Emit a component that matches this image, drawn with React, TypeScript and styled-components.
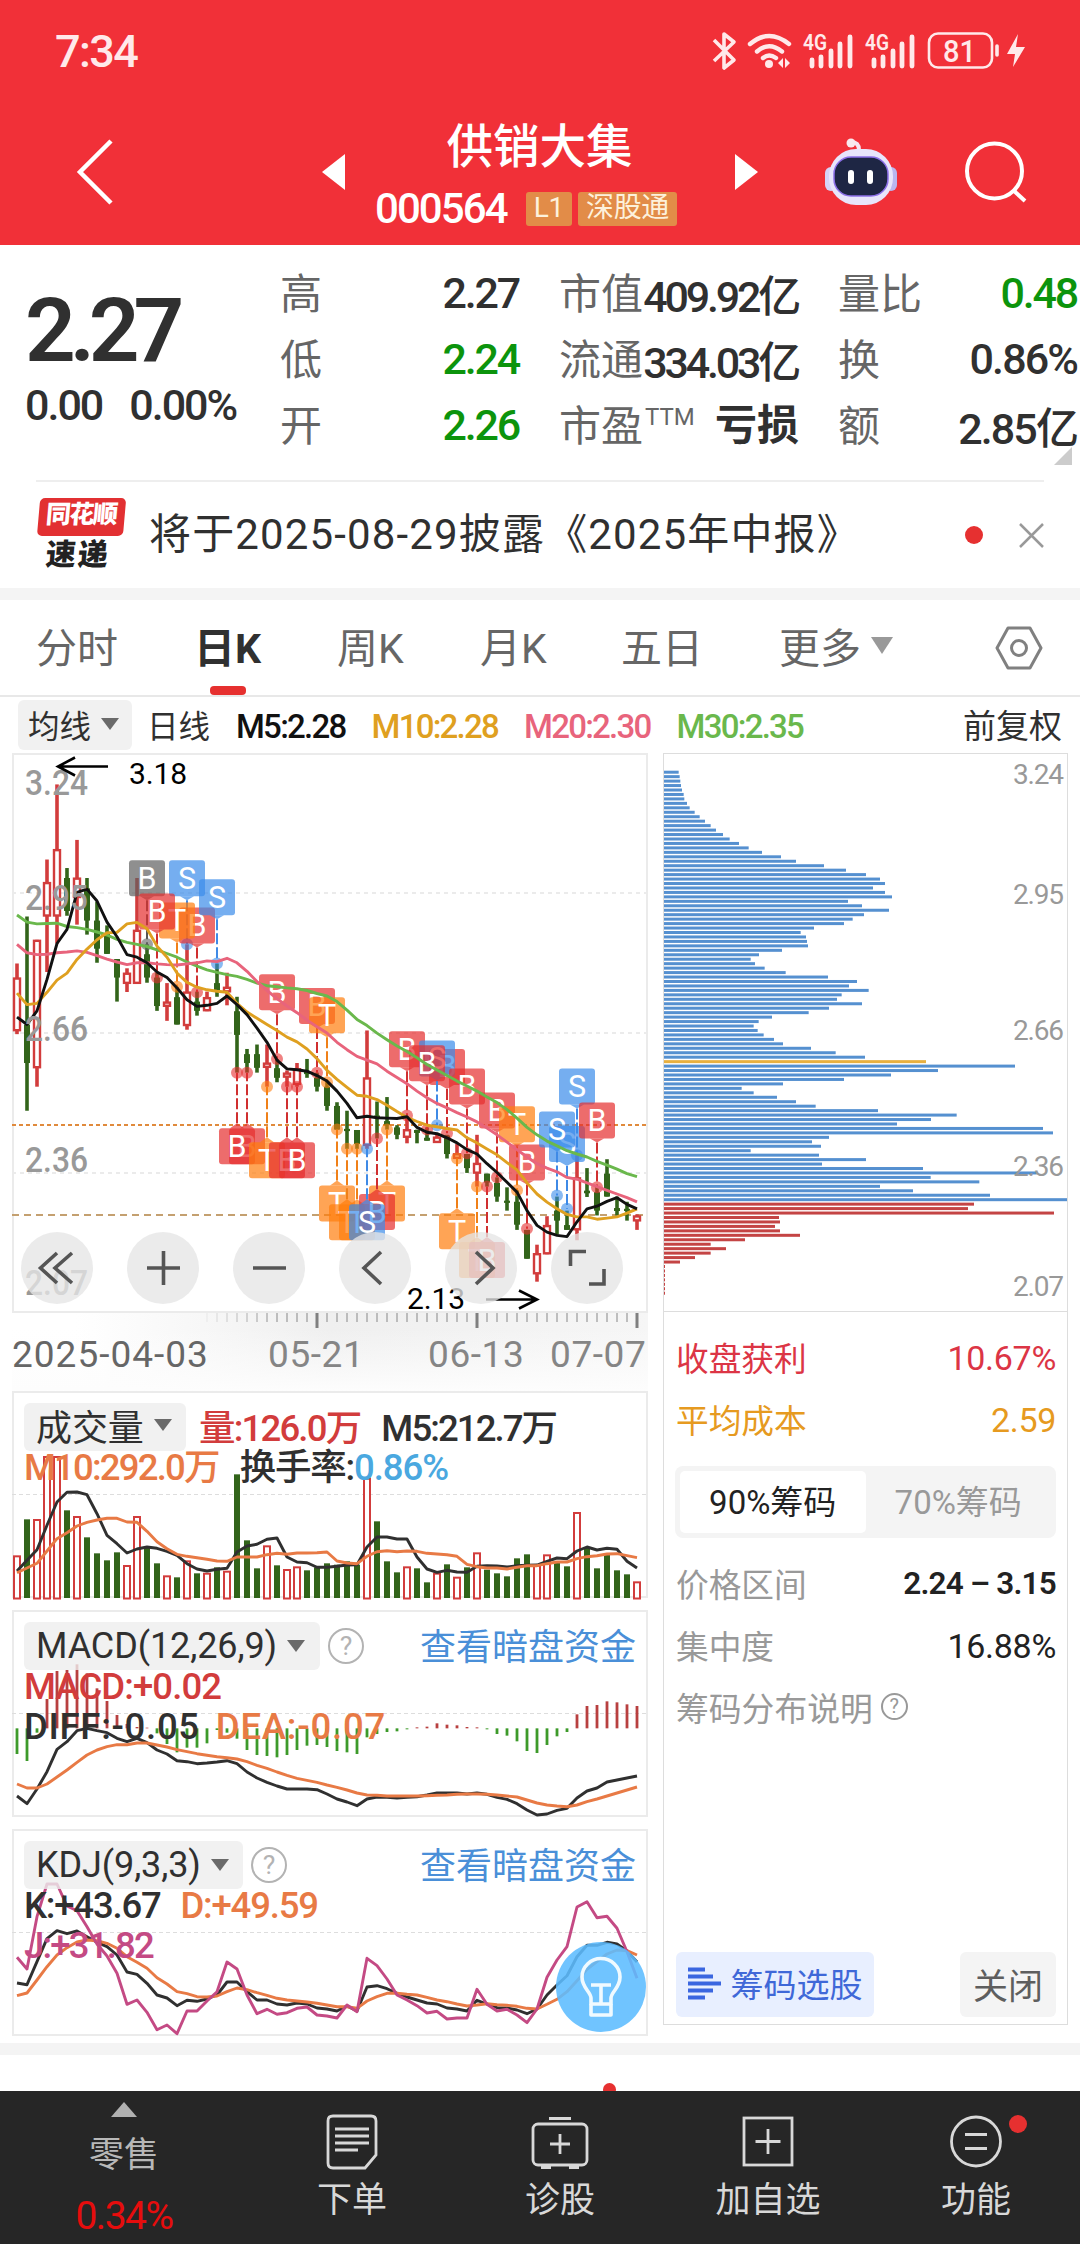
import React, { FC, ReactNode } from 'react';
import styled, { createGlobalStyle } from 'styled-components';

const RED = '#d23c3c';
const GREEN = '#32641a';
const BLUE = '#4a8fd8';
const ORANGE = '#e87a45';

const GlobalStyle = createGlobalStyle`
  body {
    margin: 0;
    background: #fff;
    font-family: Roboto, "Noto Sans CJK SC", sans-serif;
    color: #303030;
  }

  * {
    box-sizing: border-box;
  }

  svg {
    display: block;
  }
`;

const Screen = styled.div`
  width: 1080px;
  height: 2244px;
  overflow: hidden;
  display: flex;
  flex-direction: column;
  background: #fff;
`;

/* ---------- header ---------- */

const Header = styled.header`
  height: 245px;
  flex: none;
  background: #f13038;
  color: #fff;
`;

const StatusBar = styled.div`
  height: 102px;
  display: flex;
  align-items: center;
  justify-content: space-between;
  padding: 0 54px 0 55px;
`;

const Clock = styled.span`
  font-size: 45px;
  font-weight: 500;
  letter-spacing: -1.6px;
  color: #ffe9ea;
`;

const TitleBar = styled.div`
  height: 143px;
  display: grid;
  grid-template-columns: 322px 23px 390px 23px 67px 72px 68px 61px;
  align-items: center;
  padding-bottom: 4px;
`;

const BackIcon = styled.svg`
  margin-left: 76px;
`;

const TitleBlock = styled.div`
  display: flex;
  flex-direction: column;
  align-items: center;
  padding-top: 18px;
`;

const StockName = styled.div`
  font-size: 46.5px;
  font-weight: 500;
  line-height: 60px;
  margin-top: -8px;
  padding-right: 1px;
`;

const CodeRow = styled.div`
  display: flex;
  align-items: center;
  height: 60px;
  gap: 6px;
  padding: 4px 28px 0 0;
`;

const Code = styled.span`
  font-size: 42px;
  font-weight: 500;
  letter-spacing: -1.9px;
  margin-right: 13px;
`;

const Tag = styled.span`
  height: 34px;
  line-height: 32px;
  padding: 0 8px;
  border-radius: 3px;
  background: #e28c48;
  color: #fdf1dc;
  font-size: 28px;
  letter-spacing: -0.3px;
`;

/* ---------- quote ---------- */

const Quote = styled.section`
  height: 235px;
  flex: none;
  display: grid;
  grid-template-columns: 218px 242px 242px 242px;
  column-gap: 37px;
  padding: 12px 0 0 25px;
`;

const QuoteMain = styled.div`
  padding-top: 24px;
`;

const Price = styled.div`
  font-size: 89px;
  font-weight: 600;
  line-height: 100px;
  letter-spacing: -6.2px;
`;

const Change = styled.div`
  display: flex;
  gap: 27px;
  font-size: 43px;
  line-height: 48px;
  letter-spacing: -2px;
  font-weight: 500;
`;

const QuoteColumn = styled.div`
  display: flex;
  flex-direction: column;
`;

const QuoteRow = styled.div`
  display: flex;
  justify-content: space-between;
  align-items: center;
  height: 66px;
  white-space: nowrap;
  font-size: 42px;
  color: #666;
`;

const QuoteValue = styled.span<{ $tone?: string; $bold?: boolean; $spacing?: number }>`
  color: ${props => props.$tone || '#303030'};
  font-size: ${props => (props.$bold ? 42 : 43)}px;
  font-weight: ${props => (props.$bold ? 700 : 500)};
  letter-spacing: ${props => (props.$bold ? 0 : props.$spacing || -2.2)}px;
  padding: ${props => (props.$bold ? '0 2px 2px 0' : '5px 3px 0 0')};
`;

const Sup = styled.sup`
  font-size: 24px;
  vertical-align: 16px;
  line-height: 0;
  letter-spacing: 0;
  margin-left: 2px;
`;

const Corner = styled.i`
  position: absolute;
  left: 1054px;
  top: 447px;
  border-left: 18px solid transparent;
  border-bottom: 18px solid #ccc;
`;

/* ---------- news ---------- */

const News = styled.section`
  height: 108px;
  flex: none;
  margin: 0 36px;
  border-top: 2px solid #eee;
  display: flex;
  align-items: center;
`;

const NewsLogo = styled.div`
  width: 87px;
  display: flex;
  flex-direction: column;
  align-items: center;
  transform: skewX(-5deg);
  font-weight: 900;
`;

const LogoTop = styled.div`
  width: 86px;
  height: 38px;
  line-height: 34px;
  border-radius: 5px;
  background: #e23032;
  color: #fff;
  font-size: 25px;
  letter-spacing: -1.5px;
  text-align: center;
`;

const LogoBottom = styled.div`
  height: 36px;
  line-height: 37px;
  font-size: 30px;
  letter-spacing: 2px;
  color: #222;
`;

const NewsText = styled.div`
  flex: 1;
  margin-left: 26px;
  padding-bottom: 9px;
  font-size: 42px;
  letter-spacing: 1.15px;
  white-space: nowrap;
`;

const Dot = styled.i<{ $size: number }>`
  width: ${props => props.$size}px;
  height: ${props => props.$size}px;
  border-radius: 50%;
  background: #e63030;
`;

const CloseIcon = styled.svg`
  margin-left: 36px;
`;

const Band = styled.div`
  height: 12px;
  flex: none;
  background: #f4f4f4;
`;

/* ---------- tabs ---------- */

const Tabs = styled.nav`
  height: 97px;
  flex: none;
  display: grid;
  grid-template-columns: 158px 143px 143px 141px 158px 216px 48px;
  align-items: stretch;
  padding-left: 36px;
  border-bottom: 2px solid #e8e8e8;
  font-size: 41px;
  color: #666;
`;

const Tab = styled.div<{ $active?: boolean }>`
  display: flex;
  align-items: center;
  position: relative;
  justify-self: start;
  padding-bottom: 5px;
  color: ${props => (props.$active ? '#303030' : '#666')};
  font-weight: ${props => (props.$active ? 700 : 400)};

  &::after {
    content: '';
    display: ${props => (props.$active ? 'block' : 'none')};
    position: absolute;
    left: 16px;
    bottom: 0;
    width: 36px;
    height: 9px;
    border-radius: 4px;
    background: #e6302f;
  }
`;

const SettingsTab = styled(Tab)`
  padding-bottom: 0;
`;

const Caret = styled.i<{ $w?: number }>`
  border-left: ${props => (props.$w || 18) / 2}px solid transparent;
  border-right: ${props => (props.$w || 18) / 2}px solid transparent;
  border-top: ${props => ((props.$w || 18) > 20 ? 17 : 12)}px solid ${props => ((props.$w || 18) > 20 ? '#999' : '#6a6a6a')};
  margin-left: 10px;
`;

/* ---------- charts ---------- */

const AverageRow = styled.div`
  height: 56px;
  flex: none;
  display: flex;
  align-items: center;
  padding: 0 18px;
  font-size: 31.5px;
  white-space: nowrap;
`;

const AverageChip = styled.div`
  width: 114px;
  height: 50px;
  border-radius: 6px;
  background: #f1f1f1;
  display: flex;
  align-items: center;
  padding: 0 0 2px 10px;
  margin-right: 15px;
  color: #303030;
`;

const Average = styled.span<{ $color: string }>`
  color: ${props => props.$color};
  font-size: 33px;
  font-weight: 500;
  letter-spacing: -1.75px;
  margin-left: 26px;
  padding-top: 2px;
`;

const AverageLabel = styled.span`
  padding-bottom: 2px;
`;

const Adjust = styled(AverageLabel)`
  margin-left: auto;
  font-size: 33px;
`;

const Body = styled.main`
  height: 1290px;
  flex: none;
  display: flex;
  gap: 15px;
  padding-left: 12px;
`;

const LeftColumn = styled.div`
  width: 636px;
`;

const CandleBox = styled.div`
  position: relative;
  height: 560px;
`;

const ToolRow = styled.div`
  position: absolute;
  left: 9px;
  top: 479px;
  display: flex;
  gap: 34px;
`;

const Tool = styled.button`
  width: 72px;
  height: 72px;
  padding: 0;
  border: 0;
  border-radius: 50%;
  background: rgba(230, 230, 230, 0.78);
`;

const DateAxis = styled.div`
  height: 78px;
  background: linear-gradient(180deg, rgba(255, 255, 255, 0) 20%, #fdfdfd 100%),
              linear-gradient(90deg, #fff 10%, #efefef 50%, #f6f6f6 100%);
`;

const Dates = styled.div`
  display: grid;
  grid-template-columns: 256px 160px 122px 98px;
  font-size: 37px;
  line-height: 44px;
  letter-spacing: 0.6px;
  color: #858585;
  white-space: nowrap;
  margin-top: -2px;

  span:first-child {
    color: #666;
    letter-spacing: 1px;
  }
`;

const Panel = styled.div`
  position: relative;
  height: 207px;
  margin-bottom: 12px;
  border: 2px solid #ebebeb;
`;

const PanelChart = styled.svg`
  position: absolute;
  left: -2px;
  top: -2px;
`;

const PanelHead = styled.div`
  position: relative;
  display: flex;
  align-items: center;
  height: 48px;
  margin: 10px 10px 0 10px;
`;

const PanelChip = styled.div<{ $w: number; $lift?: number }>`
  width: ${props => props.$w}px;
  height: 48px;
  border-radius: 6px;
  background: rgba(238, 238, 238, 0.8);
  display: flex;
  align-items: center;
  padding: 0 0 ${props => props.$lift || 0}px 12px;
  font-size: 36px;
  letter-spacing: -0.1px;
  white-space: nowrap;
`;

const Help = styled.span<{ $size: number }>`
  width: ${props => props.$size}px;
  height: ${props => props.$size}px;
  line-height: ${props => props.$size - 4}px;
  border: 2px solid currentColor;
  border-radius: 50%;
  color: ${props => (props.$size > 30 ? '#b3b3b3' : '#999')};
  font-size: ${props => props.$size * 0.74}px;
  text-align: center;
  margin-left: 8px;
`;

const Link = styled.a`
  margin-left: auto;
  padding-bottom: 4px;
  color: ${BLUE};
  font-size: 36px;
`;

const Readings = styled.div<{ $first?: boolean }>`
  position: relative;
  height: 40px;
  line-height: 40px;
  display: flex;
  margin: ${props => (props.$first ? -3 : 0)}px 0 0 10px;
  white-space: nowrap;
`;

const Reading = styled.span<{ $color?: string; $left?: number; $spacing?: number }>`
  color: ${props => props.$color || '#303030'};
  margin-left: ${props => props.$left || 0}px;
  font-size: 36.5px;
  letter-spacing: ${props => props.$spacing || -1.2}px;
  font-weight: 500;
`;

const HeadReading = styled(Reading)`
  padding-bottom: 4px;
`;

const Bulb = styled.div`
  position: absolute;
  left: 542px;
  top: 111px;
  width: 90px;
  height: 90px;
  border-radius: 50%;
  background: rgba(92, 188, 255, 0.88);
`;

/* ---------- chip distribution ---------- */

const Chips = styled.aside`
  width: 405px;
  height: 1272px;
  border: 1px solid #ddd;
  display: flex;
  flex-direction: column;
`;

const ChipBody = styled.div`
  flex: 1;
  display: flex;
  flex-direction: column;
  border-top: 1px solid #ddd;
  padding: 13px 11px 7px 12px;
`;

const ChipRow = styled.div<{ $color: string }>`
  height: 62px;
  display: flex;
  justify-content: space-between;
  align-items: center;
  font-size: 32.7px;
  color: ${props => props.$color};
`;

const ChipValue = styled.span<{ $bold?: boolean; $dark?: boolean }>`
  font-size: ${props => (props.$bold ? 31.5 : 34)}px;
  font-weight: ${props => (props.$bold ? 600 : 400)};
  letter-spacing: ${props => (props.$bold ? -0.8 : -0.3)}px;
  color: ${props => (props.$bold || props.$dark ? '#222' : 'inherit')};
  padding-top: 3px;
`;

const Segment = styled.div`
  height: 72px;
  flex: none;
  display: flex;
  margin: 17px 0 13px -1px;
  padding: 5px;
  border-radius: 8px;
  background: #f4f4f4;
`;

const SegmentItem = styled.div<{ $active?: boolean }>`
  flex: 1;
  line-height: 63px;
  text-align: center;
  border-radius: 5px;
  background: ${props => (props.$active ? '#fff' : 'transparent')};
  color: ${props => (props.$active ? '#222' : '#999')};
  font-size: 33px;
`;

const Note = styled.div`
  height: 62px;
  display: flex;
  align-items: center;
  font-size: 32.8px;
  color: #999;
`;

const Actions = styled.div`
  margin-top: auto;
  display: flex;
  justify-content: space-between;
`;

const Action = styled.button<{ $primary?: boolean }>`
  width: ${props => (props.$primary ? 198 : 96)}px;
  height: 65px;
  padding: 0 0 3px;
  border: 0;
  border-radius: 6px;
  display: flex;
  align-items: center;
  justify-content: center;
  gap: 10px;
  font-family: inherit;
  font-size: ${props => (props.$primary ? 33 : 35)}px;
  white-space: nowrap;
  background: ${props => (props.$primary ? '#e8efff' : '#f4f4f4')};
  color: ${props => (props.$primary ? '#3f68d8' : '#5e5e5e')};
`;

/* ---------- bottom bar ---------- */

const Teaser = styled.div`
  height: 36px;
  flex: none;
  display: flex;
  align-items: flex-end;
  padding-left: 603px;
  overflow: hidden;

  i {
    margin-bottom: -5px;
  }
`;

const BottomBar = styled.footer`
  height: 153px;
  flex: none;
  display: grid;
  grid-template-columns: 248px repeat(4, 208px);
  background: #262626;
  color: #d8d8d8;
`;

const IndexItem = styled.div`
  display: flex;
  flex-direction: column;
  align-items: center;
  font-size: 35px;
  color: #b8b8b8;
`;

const IndexName = styled.span`
  line-height: 48px;
  margin-top: 15px;
`;

const IndexChange = styled.span`
  color: #e60d0d;
  font-size: 39px;
  line-height: 50px;
  letter-spacing: -1.5px;
  margin-top: 11px;
`;

const NavItem = styled.div`
  position: relative;
  display: flex;
  flex-direction: column;
  align-items: center;
  padding-top: 20px;
  font-size: 35px;
  line-height: 55px;
`;

const NavDot = styled(Dot)`
  position: absolute;
  left: 137px;
  top: 24px;
`;

/* ---------- data ---------- */

// [high, body top, body bottom, low, rising]
type Candle = [number, number, number, number, number];

const candles: Candle[] = [
  [577, 615, 760, 768, 1], [450, 742, 846, 975, 0], [513, 513, 860, 910, 1], [296, 357, 450, 600, 1],
  [93, 268, 450, 523, 1], [319, 346, 435, 448, 0], [243, 345, 400, 472, 1], [346, 374, 461, 499, 0],
  [410, 461, 537, 575, 0], [474, 497, 551, 551, 0], [565, 565, 615, 680, 0], [590, 602, 632, 654, 1],
  [346, 486, 632, 632, 1], [525, 552, 615, 629, 0], [602, 615, 692, 705, 0], [630, 680, 694, 732, 1],
  [640, 668, 742, 742, 0], [525, 653, 746, 756, 1], [653, 680, 705, 718, 0], [653, 668, 706, 706, 1],
  [577, 630, 653, 667, 0], [602, 640, 655, 690, 1], [667, 706, 770, 872, 0], [808, 822, 846, 872, 0],
  [796, 822, 859, 872, 0], [796, 845, 859, 910, 1], [835, 860, 886, 898, 0], [866, 872, 884, 910, 1],
  [846, 860, 905, 910, 1], [835, 868, 876, 886, 0], [872, 886, 910, 923, 0], [895, 910, 962, 975, 0],
  [952, 962, 1026, 1026, 0], [975, 1024, 1030, 1078, 0], [1027, 1027, 1065, 1078, 0], [758, 885, 1070, 1078, 1],
  [950, 988, 993, 1050, 0], [938, 1003, 1014, 1026, 0], [1014, 1020, 1040, 1052, 0], [990, 1025, 1048, 1063, 1],
  [1026, 1027, 1035, 1063, 0], [1020, 1048, 1056, 1056, 0], [1035, 1045, 1062, 1062, 1], [1040, 1042, 1092, 1104, 0],
  [1065, 1090, 1105, 1105, 1], [1092, 1092, 1130, 1143, 0], [1040, 1116, 1145, 1180, 1], [1145, 1145, 1169, 1180, 0],
  [1155, 1170, 1207, 1221, 0], [1182, 1218, 1224, 1245, 0], [1190, 1221, 1283, 1297, 0], [1297, 1297, 1375, 1375, 0],
  [1337, 1360, 1417, 1437, 1], [1260, 1284, 1363, 1363, 1], [1207, 1245, 1272, 1310, 0], [1245, 1284, 1297, 1297, 0],
  [1095, 1155, 1298, 1325, 1], [1130, 1191, 1198, 1208, 0], [1180, 1195, 1245, 1258, 0], [1106, 1145, 1207, 1207, 0],
  [1207, 1238, 1246, 1258, 0], [1221, 1240, 1246, 1272, 0], [1255, 1258, 1274, 1297, 1],
];

const ma5 = [722, 742, 705, 620, 523, 485, 385, 376, 408, 465, 505, 553, 560, 575, 600, 615, 643, 675, 693, 690, 685, 665, 688, 715, 752, 790, 838, 862, 864, 868, 880, 895, 922, 955, 994, 990, 994, 995, 996, 991, 1020, 1033, 1037, 1048, 1062, 1080, 1092, 1118, 1142, 1168, 1195, 1245, 1285, 1303, 1312, 1315, 1275, 1240, 1233, 1220, 1210, 1228, 1240];
const ma10 = [657, 688, 685, 655, 622, 603, 566, 538, 513, 494, 493, 470, 466, 483, 530, 560, 603, 628, 641, 648, 652, 655, 685, 708, 725, 742, 758, 776, 789, 808, 834, 866, 890, 912, 933, 936, 945, 960, 977, 993, 1004, 1014, 1018, 1023, 1027, 1048, 1062, 1078, 1094, 1115, 1135, 1170, 1200, 1222, 1240, 1255, 1262, 1262, 1268, 1265, 1262, 1252, 1240];
const ma20 = [525, 548, 553, 552, 548, 546, 543, 547, 556, 565, 573, 580, 575, 575, 578, 580, 581, 578, 575, 570, 572, 563, 575, 598, 626, 650, 672, 692, 710, 730, 748, 765, 790, 810, 828, 838, 848, 868, 885, 902, 922, 940, 955, 967, 980, 992, 1005, 1022, 1040, 1060, 1080, 1100, 1118, 1130, 1140, 1155, 1160, 1170, 1180, 1190, 1200, 1210, 1221];
const ma30 = [446, 465, 470, 469, 468, 477, 480, 485, 492, 500, 512, 520, 525, 531, 540, 550, 560, 573, 584, 594, 601, 607, 612, 620, 630, 637, 640, 643, 645, 650, 658, 665, 680, 703, 728, 745, 765, 783, 800, 815, 832, 850, 865, 880, 895, 908, 922, 938, 953, 972, 995, 1020, 1040, 1057, 1070, 1083, 1092, 1100, 1112, 1122, 1133, 1145, 1153];

// [day, letter, marked price, label top]; X is a greyed-out buy
type Mark = [number, string, number, number];

const marks: Mark[] = [
  [13, 'X', 525, 298], [17, 'S', 525, 298], [18, 'B', 655, 426], [16, 'T', 640, 412], [14, 'B', 615, 388], [20, 'S', 577, 349],
  [26, 'B', 835, 606], [30, 'B', 872, 643], [31, 'T', 898, 668],
  [23, 'B', 872, 1022], [22, 'B', 872, 1022], [25, 'T', 910, 1060], [27, 'B', 910, 1060], [28, 'B', 910, 1060],
  [32, 'T', 1026, 1177], [33, 'T', 1078, 1228], [34, 'T', 1078, 1228], [37, 'T', 1026, 1177], [36, 'B', 1050, 1200], [35, 'S', 1078, 1228],
  [39, 'B', 988, 760], [43, 'B', 1036, 808], [42, 'S', 1014, 785], [41, 'B', 1026, 798], [45, 'B', 1090, 861],
  [44, 'T', 1104, 1252], [46, 'T', 1180, 1330], [47, 'B', 1180, 1330],
  [48, 'B', 1155, 926], [50, 'T', 1190, 963], [51, 'B', 1294, 1066],
  [56, 'S', 1095, 861], [55, 'S', 1240, 1016], [54, 'S', 1204, 977], [58, 'B', 1182, 953],
];

const markColors: { [key: string]: [string, string] } = {
  B: ['#e62e2e', '#d02f2f'],
  T: ['#ff7d0d', '#f08018'],
  S: ['#3b8cea', '#3f8ae6'],
  X: ['#606060', '#555'],
};

const volumes = [765, 657, 656, 467, 467, 630, 647, 711, 759, 780, 756, 794, 647, 742, 789, 825, 831, 780, 819, 817, 801, 811, 522, 720, 804, 735, 795, 806, 798, 810, 801, 789, 793, 783, 793, 532, 663, 783, 816, 798, 804, 846, 817, 792, 829, 801, 756, 808, 819, 828, 774, 762, 793, 762, 787, 798, 635, 740, 804, 762, 810, 822, 843];
const rising = [0, 2, 3, 4, 6, 11, 12, 15, 17, 19, 21, 25, 27, 28, 35, 39, 42, 44, 46, 52, 53, 56, 62];
const vol5 = [812, 780, 748, 675, 605, 576, 575, 583, 640, 705, 730, 758, 746, 740, 744, 753, 765, 790, 806, 812, 807, 804, 755, 737, 732, 717, 713, 770, 785, 787, 801, 801, 798, 794, 793, 740, 710, 710, 716, 716, 770, 806, 816, 810, 815, 816, 798, 796, 797, 800, 796, 795, 794, 783, 773, 775, 752, 740, 749, 744, 747, 783, 803];
const vol10 = [817, 803, 789, 752, 715, 697, 677, 666, 659, 654, 654, 665, 666, 693, 724, 745, 762, 768, 772, 777, 782, 783, 770, 770, 770, 763, 759, 762, 758, 758, 757, 755, 782, 788, 790, 768, 754, 751, 754, 752, 753, 759, 761, 763, 768, 792, 799, 803, 803, 806, 801, 796, 796, 790, 785, 785, 775, 769, 766, 761, 760, 766, 772];

const macd = [462, 483, 398, 297, 213, 210, 193, 220, 265, 303, 345, 372, 381, 383, 400, 432, 457, 443, 443, 430, 390, 398, 416, 450, 465, 468, 472, 465, 450, 437, 435, 441, 453, 457, 462, 412, 402, 396, 394, 388, 382, 380, 370, 374, 376, 381, 382, 388, 402, 407, 424, 453, 459, 435, 409, 396, 343, 318, 315, 304, 307, 313, 318];
const diff = [588, 611, 567, 515, 448, 425, 392, 385, 392, 398, 415, 425, 415, 428, 450, 462, 482, 485, 491, 489, 486, 482, 491, 516, 534, 547, 558, 567, 567, 567, 569, 582, 597, 606, 617, 597, 591, 592, 594, 592, 590, 585, 579, 579, 579, 582, 579, 583, 592, 598, 611, 630, 645, 642, 631, 625, 594, 573, 564, 546, 540, 534, 528];
const dea = [552, 564, 564, 552, 531, 510, 487, 465, 450, 440, 434, 434, 429, 429, 435, 441, 449, 455, 461, 466, 470, 473, 477, 485, 496, 505, 516, 526, 535, 541, 547, 555, 562, 570, 579, 585, 586, 588, 588, 588, 588, 587, 586, 585, 583, 582, 582, 583, 585, 588, 591, 600, 609, 615, 618, 620, 615, 605, 597, 588, 579, 570, 561];

const kdjK = [489, 494, 425, 356, 332, 341, 333, 350, 367, 380, 405, 456, 463, 490, 525, 534, 557, 541, 544, 537, 525, 486, 486, 515, 540, 540, 552, 555, 549, 552, 564, 567, 573, 558, 573, 501, 497, 506, 520, 531, 540, 549, 552, 564, 567, 573, 541, 552, 563, 564, 570, 581, 567, 525, 495, 467, 410, 376, 376, 367, 372, 393, 426];
const kdjD = [527, 519, 480, 440, 405, 383, 366, 360, 362, 370, 385, 410, 427, 445, 473, 492, 515, 521, 530, 531, 528, 515, 504, 509, 518, 526, 535, 540, 543, 546, 550, 555, 560, 560, 565, 543, 530, 520, 520, 523, 525, 532, 540, 545, 552, 558, 555, 551, 554, 556, 559, 565, 567, 553, 538, 515, 482, 448, 425, 402, 390, 392, 405];
const kdjJ = [412, 447, 290, 192, 192, 258, 272, 320, 372, 408, 460, 553, 540, 577, 629, 615, 641, 573, 573, 543, 515, 426, 447, 525, 581, 568, 583, 578, 565, 561, 585, 588, 594, 555, 575, 415, 437, 477, 525, 540, 557, 579, 574, 597, 594, 594, 508, 553, 573, 568, 585, 608, 567, 472, 420, 380, 261, 245, 293, 289, 325, 395, 475];

const distribution = [
  86, 89, 91, 93, 96, 101, 103, 111, 119, 134, 149, 165, 182, 198, 219, 239, 267, 296, 336, 393, 438, 522, 588, 648, 690, 705, 669, 705,
  726, 594, 636, 717, 642, 608, 582, 492, 452, 468, 471, 474, 396, 327, 302, 315, 344, 407, 534, 621, 597, 656, 575, 561, 636, 537, 476,
  366, 326, 311, 323, 341, 372, 399, 483, 557, 645, 828, 1095, 864, 723, 582, 399, 275, 311, 381, 438, 497, 684, 920, 843, 741, 1179, 1209,
  537, 486, 513, 302, 507, 648, 516, 819, 1160, 842, 988, 690, 789, 1020, 1252, 972, 954, 1212, 387, 390, 375, 390, 450, 285, 182, 228,
  182, 135, 90, 45, 45, 45, 45, 45, 45, 45,
];
const AVERAGE_COST = 65;
const FIRST_PROFIT = 97;

const dayX = (i: number) => 5 + i * 10;
const priceY = (v: number) => v * 0.37 - 3;
const toPoints = (values: number[], y: (v: number) => number) =>
  values.map((v, i) => `${dayX(i)},${y(v).toFixed(1)}`).join(' ');

/* ---------- drawings ---------- */

interface ILine {
  values: number[];
  y: (v: number) => number;
  color: string;
}

const Line: FC<ILine> = ({ values, y, color }) => (
  <polyline points={toPoints(values, y)} fill="none" stroke={color} strokeWidth="2.9" strokeLinejoin="round" />
);

const MarkBadge: FC<{ mark: Mark }> = ({ mark }) => {
  const [day, letter, dot, top] = mark;
  const [fill, stroke] = markColors[letter];
  const x = dayX(day);
  const y = priceY(top);
  const dotY = priceY(dot);
  const above = y < dotY;
  const tip = above ? y + 40 : y - 5;
  const edge = above ? y + 36 : y;
  return (
    <g>
      <line x1={x} x2={x} y1={tip} y2={dotY} stroke={stroke} strokeWidth="2" strokeDasharray="11 3" />
      <circle cx={x} cy={dotY} r="6" fill={fill} opacity="0.6" />
      <rect x={x - 18} y={y} width="36" height="36" rx="3" fill={fill} opacity="0.7" />
      <path d={`M${x - 7} ${edge} L${x} ${tip} L${x + 7} ${edge}Z`} fill={fill} opacity="0.7" />
      <text x={x} y={y + 28.5} fontSize="30.5" fill="#fff" textAnchor="middle">{letter === 'X' ? 'B' : letter}</text>
    </g>
  );
};

const CandleChart = () => (
  <svg width="636" height="560">
    <rect x="1" y="1" width="634" height="558" fill="#fff" stroke="#ebebeb" strokeWidth="2" />
    {[140, 280, 420].map(y => (
      <line key={y} x1="0" x2="636" y1={y} y2={y} stroke="#ebebeb" strokeWidth="2" strokeDasharray="4 4" />
    ))}
    <line x1="0" x2="636" y1="372" y2="372" stroke="#e08a3c" strokeWidth="2" strokeDasharray="4 3" />
    <line x1="0" x2="636" y1="462" y2="462" stroke="#c4a070" strokeWidth="2" strokeDasharray="7 5" />
    {candles.map(([high, top, bottom, low, up], i) => {
      const x = dayX(i);
      const color = up ? RED : GREEN;
      return (
        <g key={i}>
          <line x1={x} x2={x} y1={priceY(high)} y2={priceY(low)} stroke={color} strokeWidth="3.6" />
          {up ? (
            <rect x={x - 3} y={priceY(top) + 1} width="6" height={Math.max(3, (bottom - top) * 0.37 - 2)} fill="#fff" stroke={color} strokeWidth="2.4" />
          ) : (
            <rect x={x - 3} y={priceY(top)} width="6" height={(bottom - top) * 0.37} fill={color} />
          )}
        </g>
      );
    })}
    {marks.map(mark => <MarkBadge key={mark[0]} mark={mark} />)}
    <Line values={ma30} y={priceY} color="#6ab84c" />
    <Line values={ma20} y={priceY} color="#e8647c" />
    <Line values={ma10} y={priceY} color="#dfa020" />
    <Line values={ma5} y={priceY} color="#111" />
    <g fill="#999" fontSize="35" fontWeight="500">
      <text x="13" y="42" textLength="63" lengthAdjust="spacingAndGlyphs">3.24</text>
      <text x="13" y="157" textLength="63" lengthAdjust="spacingAndGlyphs">2.95</text>
      <text x="13" y="288" textLength="63" lengthAdjust="spacingAndGlyphs">2.66</text>
      <text x="13" y="419" textLength="63" lengthAdjust="spacingAndGlyphs">2.36</text>
      <text x="13" y="542" textLength="63" lengthAdjust="spacingAndGlyphs">2.07</text>
    </g>
    <g stroke="#000" strokeWidth="2.6" fill="none">
      <path d="M96 13.500H46M63 4.500L46 13.500L63 22.500" />
      <path d="M474 546.500H525M507 537.500L525 546.500L507 555.500" />
    </g>
    <g fontSize="30" fill="#000">
      <text x="117" y="31" textLength="58">3.18</text>
      <text x="395" y="556" textLength="58">2.13</text>
    </g>
  </svg>
);

const tools: ReactNode[] = [
  <path d="M36 21L19.500 36L36 51M51 21L34 36L51 51" />,
  <path d="M20 36H53M36.500 19V53" />,
  <path d="M20 36H53" />,
  <path d="M42 20L25 36L42 52" />,
  <path d="M31 20L48 36L31 52" />,
  <path d="M35 19.500H19.500V34M38 52H53V37" />,
];

const Ticks = () => (
  <svg width="636" height="22">
    {Array.from({ length: 44 }, (_, n) => {
      const i = n + 19;
      const major = (i - 30) % 16 === 0;
      return (
        <line
          key={i}
          x1={dayX(i)}
          x2={dayX(i)}
          y1="0"
          y2={major ? 15 : 9}
          stroke={major ? '#808080' : '#999'}
          strokeWidth={major ? 3 : 1.2}
          opacity={Math.min(1, (n + 1) / 8)}
        />
      );
    })}
  </svg>
);

const volumeY = (v: number) => (v - 272) / 3;
const macdY = (v: number) => (v - 30) / 3;
const kdjY = (v: number) => (v - 27) / 3;

const DashLine: FC<{ y: number }> = ({ y }) => (
  <line x1="0" x2="636" y1={y} y2={y} stroke="#ddd" strokeWidth="1.2" strokeDasharray="4 3" />
);

const VolumeChart = () => (
  <PanelChart width="636" height="210">
    <DashLine y={103.5} />
    {volumes.map((v, i) => (rising.includes(i) ? (
      <rect key={i} x={dayX(i) - 3} y={volumeY(v) + 1} width="6" height={206.500 - volumeY(v)} fill="#fff" stroke={RED} strokeWidth="2" />
    ) : (
      <rect key={i} x={dayX(i) - 3} y={volumeY(v)} width="6" height={207 - volumeY(v)} fill={GREEN} />
    )))}
    <Line values={vol5} y={volumeY} color="#303030" />
    <Line values={vol10} y={volumeY} color={ORANGE} />
  </PanelChart>
);

const MacdChart = () => (
  <PanelChart width="636" height="207">
    <DashLine y={103.5} />
    {macd.map((v, i) => (
      <line key={i} x1={dayX(i)} x2={dayX(i)} y1={macdY(385)} y2={macdY(v)} stroke={v < 385 ? '#b84040' : '#3d9a2a'} strokeWidth="2.8" />
    ))}
    <Line values={diff} y={macdY} color="#303030" />
    <Line values={dea} y={macdY} color={ORANGE} />
  </PanelChart>
);

const KdjChart = () => (
  <PanelChart width="636" height="207">
    <DashLine y={103.5} />
    <Line values={kdjK} y={kdjY} color="#303030" />
    <Line values={kdjD} y={kdjY} color={ORANGE} />
    <Line values={kdjJ} y={kdjY} color="#c44a84" />
  </PanelChart>
);

const DistributionChart = () => (
  <svg width="403" height="557">
    {distribution.map((edge, i) => {
      let color = '#5590d0';
      if (i === AVERAGE_COST) color = '#e8b040';
      if (i >= FIRST_PROFIT) color = '#c44444';
      return <rect key={i} x="0" y={16.7 + i * 4.453} width={(edge - 42) / 3} height="3" fill={color} />;
    })}
    <g fontSize="28" fill="#999">
      <text x="349" y="30" textLength="51">3.24</text>
      <text x="349" y="150" textLength="51">2.95</text>
      <text x="349" y="286" textLength="51">2.66</text>
      <text x="349" y="422" textLength="51">2.36</text>
      <text x="349" y="542" textLength="51">2.07</text>
    </g>
  </svg>
);

const StatusIcons = () => (
  <svg width="314" height="44" viewBox="712 29 314 44" fill="none" stroke="#ffe9ea">
    <path d="M714 40L734 60L724 68V34L734 42L714 61" strokeWidth="3.6" strokeLinejoin="round" />
    <path d="M750 44Q769 28 789 44M757 51.500Q769 41 782 51.500M763 58Q769 53 776 58" strokeWidth="4.4" strokeLinecap="round" />
    <circle cx="769" cy="64" r="4" fill="#ffe9ea" stroke="none" />
    <path d="M778 63l5-5v10zM785 58l5 5-5 5z" fill="#ffe9ea" stroke="none" />
    {[0, 62].map(dx => (
      <g key={dx} transform={`translate(${dx} 0)`}>
        <path d="M812 60V66M821 57V66M831 51V66M840 44V66M850 37V66" strokeWidth="4.8" strokeLinecap="round" />
        <text x="803" y="50" fontSize="22" fontWeight="600" fill="#ffe9ea" stroke="none" textLength="24" lengthAdjust="spacingAndGlyphs">4G</text>
      </g>
    ))}
    <rect x="929" y="33.500" width="63" height="34" rx="9" strokeWidth="2.6" />
    <path d="M997 46V55" strokeWidth="3.600" strokeLinecap="round" />
    <text x="943" y="61.500" fontSize="31" fontWeight="500" fill="#ffe9ea" stroke="none" textLength="33" lengthAdjust="spacingAndGlyphs">81</text>
    <path d="M1018 34L1007 54H1015L1013 67L1025 47H1016Z" fill="#ffe9ea" stroke="none" />
  </svg>
);

const Robot = () => (
  <svg width="72" height="70" viewBox="0 0 72 70">
    <path d="M34 13Q34 5 26 5" fill="none" stroke="#f6e6f2" strokeWidth="4" />
    <circle cx="26" cy="6" r="4.500" fill="#f9e9ee" />
    <rect x="0" y="30" width="12" height="24" rx="6" fill="#d6d3f7" />
    <rect x="60" y="30" width="12" height="24" rx="6" fill="#b9b6f0" />
    <rect x="4" y="12" width="64" height="56" rx="27" fill="#e8e5fb" />
    <rect x="9" y="20" width="54" height="39" rx="17" fill="#1e2644" stroke="#8c6fe8" strokeWidth="1.500" />
    <rect x="23" y="33" width="6" height="14" rx="3" fill="#fff" />
    <rect x="42" y="33" width="6" height="14" rx="3" fill="#fff" />
  </svg>
);

const NavIcon: FC<{ children: ReactNode }> = ({ children }) => (
  <svg width="62" height="62" fill="none" stroke="#d8d8d8" strokeWidth="2.8">{children}</svg>
);

const App = () => (
  <Screen>
    <GlobalStyle />
    <Header>
      <StatusBar>
        <Clock>7:34</Clock>
        <StatusIcons />
      </StatusBar>
      <TitleBar>
        <BackIcon width="40" height="70" fill="none" stroke="#fff" strokeWidth="4.5">
          <path d="M35 4L4 35L35 66" />
        </BackIcon>
        <svg width="23" height="36"><path d="M0 18L23 0V36Z" fill="#fff" /></svg>
        <TitleBlock>
          <StockName>供销大集</StockName>
          <CodeRow>
            <Code>000564</Code>
            <Tag>L1</Tag>
            <Tag>深股通</Tag>
          </CodeRow>
        </TitleBlock>
        <svg width="23" height="36"><path d="M23 18L0 0V36Z" fill="#fff" /></svg>
        <i />
        <Robot />
        <i />
        <svg width="62" height="62" fill="none" stroke="#fff" strokeWidth="4">
          <circle cx="29.500" cy="30" r="27.500" />
          <path d="M48 49L60 60" />
        </svg>
      </TitleBar>
    </Header>

    <Quote>
      <QuoteMain>
        <Price>2.27</Price>
        <Change><span>0.00</span><span>0.00%</span></Change>
      </QuoteMain>
      <QuoteColumn>
        <QuoteRow>高<QuoteValue>2.27</QuoteValue></QuoteRow>
        <QuoteRow>低<QuoteValue $tone="#0c940c">2.24</QuoteValue></QuoteRow>
        <QuoteRow>开<QuoteValue $tone="#0c940c">2.26</QuoteValue></QuoteRow>
      </QuoteColumn>
      <QuoteColumn>
        <QuoteRow>市值<QuoteValue $spacing={-3.2}>409.92亿</QuoteValue></QuoteRow>
        <QuoteRow>流通<QuoteValue $spacing={-3.2}>334.03亿</QuoteValue></QuoteRow>
        <QuoteRow><span>市盈<Sup>TTM</Sup></span><QuoteValue $bold>亏损</QuoteValue></QuoteRow>
      </QuoteColumn>
      <QuoteColumn>
        <QuoteRow>量比<QuoteValue $tone="#0c940c">0.48</QuoteValue></QuoteRow>
        <QuoteRow>换<QuoteValue $spacing={-1.9}>0.86%</QuoteValue></QuoteRow>
        <QuoteRow>额<QuoteValue $spacing={-1.9}>2.85亿</QuoteValue></QuoteRow>
      </QuoteColumn>
      <Corner />
    </Quote>

    <News>
      <NewsLogo>
        <LogoTop>同花顺</LogoTop>
        <LogoBottom>速递</LogoBottom>
      </NewsLogo>
      <NewsText>将于2025-08-29披露《2025年中报》</NewsText>
      <Dot $size={18} />
      <CloseIcon width="25" height="25" stroke="#999" strokeWidth="2.500">
        <path d="M1 1L24 24M24 1L1 24" />
      </CloseIcon>
    </News>
    <Band />

    <Tabs>
      <Tab>分时</Tab>
      <Tab $active>日K</Tab>
      <Tab>周K</Tab>
      <Tab>月K</Tab>
      <Tab>五日</Tab>
      <Tab>更多<Caret $w={23} /></Tab>
      <SettingsTab>
        <svg width="48" height="48" fill="none" stroke="#808080" strokeWidth="3">
          <path d="M13 4H35L46 24L35 44H13L2 24Z" strokeLinejoin="round" />
          <circle cx="24" cy="24" r="7.500" />
        </svg>
      </SettingsTab>
    </Tabs>

    <AverageRow>
      <AverageChip>均线<Caret /></AverageChip>
      <AverageLabel>日线</AverageLabel>
      <Average $color="#111">M5:2.28</Average>
      <Average $color="#dfa020">M10:2.28</Average>
      <Average $color="#e8647c">M20:2.30</Average>
      <Average $color="#6ab84c">M30:2.35</Average>
      <Adjust>前复权</Adjust>
    </AverageRow>

    <Body>
      <LeftColumn>
        <CandleBox>
          <CandleChart />
          <ToolRow>
            {tools.map((icon, i) => (
              <Tool key={i}>
                <svg width="72" height="72" fill="none" stroke="#555" strokeWidth="3.600">{icon}</svg>
              </Tool>
            ))}
          </ToolRow>
        </CandleBox>
        <DateAxis>
          <Ticks />
          <Dates>
            <span>2025-04-03</span>
            <span>05-21</span>
            <span>06-13</span>
            <span>07-07</span>
          </Dates>
        </DateAxis>

        <Panel>
          <VolumeChart />
          <PanelHead>
            <PanelChip $w={162} $lift={4}>成交量<Caret /></PanelChip>
            <HeadReading $color={RED} $left={13} $spacing={-1.8}>量:126.0万</HeadReading>
            <HeadReading $left={21} $spacing={-1.9}>M5:212.7万</HeadReading>
          </PanelHead>
          <Readings $first>
            <Reading $color={ORANGE} $spacing={-1.8}>M10:292.0万</Reading>
            <Reading $left={21}>换手率:</Reading>
            <Reading $color="#4aa8e0" $spacing={-1}>0.86%</Reading>
          </Readings>
        </Panel>

        <Panel>
          <MacdChart />
          <PanelHead>
            <PanelChip $w={296}>MACD(12,26,9)<Caret /></PanelChip>
            <Help $size={36}>?</Help>
            <Link>查看暗盘资金</Link>
          </PanelHead>
          <Readings $first>
            <Reading $color={RED} $spacing={-0.9}>MACD:+0.02</Reading>
          </Readings>
          <Readings>
            <Reading $spacing={0.7}>DIFF:-0.05</Reading>
            <Reading $color={ORANGE} $left={16} $spacing={0.8}>DEA:-0.07</Reading>
          </Readings>
        </Panel>

        <Panel>
          <KdjChart />
          <PanelHead>
            <PanelChip $w={219}>KDJ(9,3,3)<Caret /></PanelChip>
            <Help $size={36}>?</Help>
            <Link>查看暗盘资金</Link>
          </PanelHead>
          <Readings $first>
            <Reading>K:+43.67</Reading>
            <Reading $color={ORANGE} $left={20}>D:+49.59</Reading>
          </Readings>
          <Readings>
            <Reading $color="#c44a84" $spacing={-1.8}>J:+31.82</Reading>
          </Readings>
          <Bulb>
            <svg width="90" height="90" fill="none" stroke="#f0faff" strokeWidth="3.600" strokeLinejoin="round">
              <path d="M35 62V56C35 50 26 46 26 35A19 18.500 0 0 1 64 35C64 46 55 50 55 56V62Z" />
              <path d="M35 62V73H55V62M35 43H55M45 43V62" />
            </svg>
          </Bulb>
        </Panel>
      </LeftColumn>

      <Chips>
        <DistributionChart />
        <ChipBody>
          <ChipRow $color="#dc3545">收盘获利<ChipValue>10.67%</ChipValue></ChipRow>
          <ChipRow $color="#e69a20">平均成本<ChipValue>2.59</ChipValue></ChipRow>
          <Segment>
            <SegmentItem $active>90%筹码</SegmentItem>
            <SegmentItem>70%筹码</SegmentItem>
          </Segment>
          <ChipRow $color="#999">价格区间<ChipValue $bold>2.24 – 3.15</ChipValue></ChipRow>
          <ChipRow $color="#999">集中度<ChipValue $dark>16.88%</ChipValue></ChipRow>
          <Note>筹码分布说明<Help $size={27}>?</Help></Note>
          <Actions>
            <Action $primary>
              <svg width="33" height="33" stroke="#3a66e0" strokeWidth="4">
                <path d="M0 2.500H17M0 9.500H25M0 16.500H33M0 23.500H25M0 30.500H17" />
              </svg>
              筹码选股
            </Action>
            <Action>关闭</Action>
          </Actions>
        </ChipBody>
      </Chips>
    </Body>
    <Band />

    <Teaser><Dot $size={13} /></Teaser>

    <BottomBar>
      <IndexItem>
        <svg width="26" height="26"><path d="M0 26L13 11L26 26Z" fill="#b0b0b0" /></svg>
        <IndexName>零售</IndexName>
        <IndexChange>0.34%</IndexChange>
      </IndexItem>
      <NavItem>
        <NavIcon>
          <path d="M12 5H50Q55 5 55 10V44L44 57H12Q7 57 7 52V10Q7 5 12 5Z" />
          <path d="M14 18H48M14 25H48M14 32H48M14 39H37" />
        </NavIcon>
        下单
      </NavItem>
      <NavItem>
        <NavIcon>
          <rect x="4" y="13" width="54" height="41" rx="5" />
          <path d="M20 7.500H42M31 23V43M21 33H41M12 56.500H22M40 56.500H50" />
        </NavIcon>
        诊股
      </NavItem>
      <NavItem>
        <NavIcon>
          <rect x="7" y="7" width="48" height="47" />
          <path d="M31 18V43M18.500 30.500H43.500" />
        </NavIcon>
        加自选
      </NavItem>
      <NavItem>
        <NavIcon>
          <circle cx="31" cy="30.500" r="24.500" />
          <path d="M20 23.500H42M20 37.500H42" />
        </NavIcon>
        功能
        <NavDot $size={18} />
      </NavItem>
    </BottomBar>
  </Screen>
);

export default App;
